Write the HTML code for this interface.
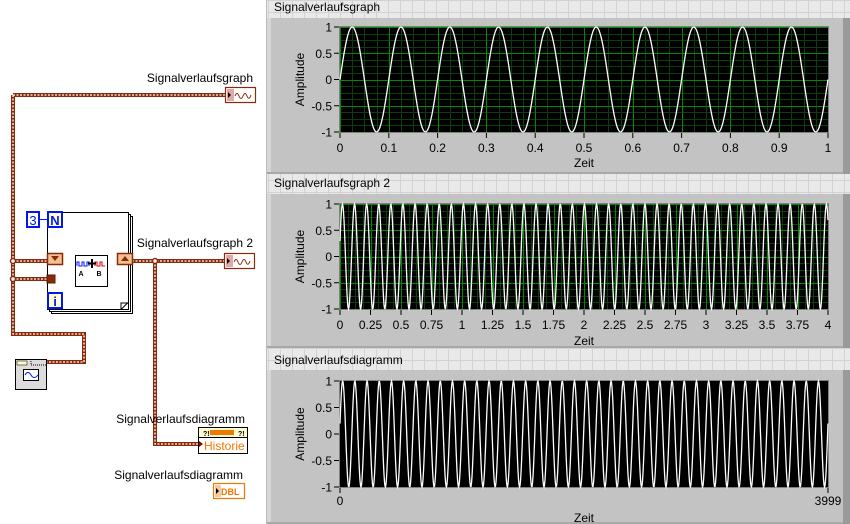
<!DOCTYPE html>
<html><head><meta charset="utf-8">
<style>
html,body{margin:0;padding:0;width:850px;height:524px;overflow:hidden;background:#fff;font-family:"Liberation Sans",sans-serif;}
svg text{font-family:"Liberation Sans",sans-serif;}
</style></head>
<body>
<svg id="s" width="850" height="524" xmlns="http://www.w3.org/2000/svg" style="position:absolute;left:0;top:0">
<defs>
<pattern id="bg" x="268" y="0" width="12" height="12" patternUnits="userSpaceOnUse">
<rect width="12" height="12" fill="#e9e9e9"/>
<path d="M0 0.5H12M0.5 0V12" stroke="#d2d2d2" stroke-width="1"/>
</pattern>
</defs>
<rect x="0" y="0" width="266" height="524" fill="#fff"/>
<rect x="266" y="0" width="584" height="524" fill="url(#bg)"/>
<line x1="266.5" y1="0" x2="266.5" y2="524" stroke="#bdbdbd"/>

<g fill="none" stroke-linejoin="miter">
<g stroke="#8a2a0a" stroke-width="4">
<path d="M13 95H226M13 95V334H84V362H47M13 261H48M13 279H48M55 279H70V266H76M62 258H76M107 258H117M132 261H226M155 261V444H200"/>
</g>
<g stroke="#fff" stroke-width="1.3" stroke-dasharray="2 1.5">
<path d="M13 95H226M13 95V334H84V362H47M13 261H48M13 279H48M55 279H70V266H76M62 258H76M107 258H117M132 261H226M155 261V444H200"/>
</g>
</g>
<circle cx="13" cy="261" r="2.5" fill="#fff" stroke="#8a2a0a" stroke-width="1.5"/>
<circle cx="13" cy="279" r="2.5" fill="#fff" stroke="#8a2a0a" stroke-width="1.5"/>
<circle cx="155" cy="261" r="2.5" fill="#fff" stroke="#8a2a0a" stroke-width="1.5"/>

<rect x="51.5" y="216.5" width="81" height="97" fill="#fff" stroke="#000"/>
<rect x="49.5" y="214.5" width="81" height="97" fill="#fff" stroke="#000"/>
<rect x="47.5" y="212.5" width="81" height="97" fill="#fff" stroke="#000"/>
<path d="M121 309.5L128 302.5M121 309V303H128" stroke="#000" fill="none"/>
<rect x="27" y="212" width="12" height="15" fill="#fff" stroke="#0018f0" stroke-width="2"/>
<text x="33" y="225" font-size="13" text-anchor="middle" fill="#0018f0">3</text>
<line x1="39" y1="219.5" x2="48" y2="219.5" stroke="#0018f0"/>
<rect x="48" y="212" width="14" height="15" fill="#fffbd0" stroke="#0018f0" stroke-width="2"/>
<text x="55" y="225" font-size="13" font-weight="bold" text-anchor="middle" fill="#0018f0">N</text>
<rect x="48" y="293" width="14" height="15" fill="#fffbd0" stroke="#0018f0" stroke-width="2"/>
<text x="55" y="306" font-size="13" font-weight="bold" text-anchor="middle" fill="#0018f0">i</text>
<rect x="47.5" y="253.5" width="15" height="11" fill="#f2c290" stroke="#8a2a0a" stroke-width="1.5"/>
<path d="M51 256H59L55 261Z" fill="#8a2a0a"/>
<rect x="117.5" y="253.5" width="15" height="11" fill="#f2c290" stroke="#8a2a0a" stroke-width="1.5"/>
<path d="M121 261H129L125 256Z" fill="#8a2a0a"/>
<rect x="47" y="275" width="8" height="8" fill="#8a2a0a" stroke="#5a1a00"/>
<rect x="75.5" y="255.5" width="32" height="31" fill="#fff" stroke="#000"/>
<path d="M77 266V262H79V266H82V262H84V266H87V262H89V266" stroke="#0018f0" fill="none"/>
<path d="M95 266V262H97V266H100V262H102V266H105" stroke="#e00000" fill="none"/>
<path d="M92 259V268M88 263.5H96" stroke="#000" stroke-width="2"/>
<text x="81" y="276" font-size="7" font-weight="bold" text-anchor="middle">A</text>
<text x="99" y="276" font-size="7" font-weight="bold" text-anchor="middle">B</text>

<text x="253" y="82" font-size="12" text-anchor="end">Signalverlaufsgraph</text>
<rect x="225.5" y="87.5" width="30" height="15" fill="#fff" stroke="#8a2a0a" stroke-width="1.2"/>
<rect x="227" y="89" width="7" height="12" fill="#e0a8a8"/>
<path d="M228 92L231 95L228 98Z" fill="#000"/>
<path d="M235 96Q237 91 239 96T243 96T247 96T251 95" stroke="#8a2a0a" fill="none"/>
<text x="253" y="247" font-size="12" text-anchor="end">Signalverlaufsgraph 2</text>
<rect x="224.5" y="253.5" width="30" height="15" fill="#fff" stroke="#8a2a0a" stroke-width="1.2"/>
<rect x="226" y="255" width="7" height="12" fill="#e0a8a8"/>
<path d="M227 258L230 261L227 264Z" fill="#000"/>
<path d="M234 262Q236 257 238 262T242 262T246 262T250 261" stroke="#8a2a0a" fill="none"/>

<rect x="15.5" y="359.5" width="31" height="30" fill="#dcdcdc" stroke="#000"/>
<rect x="17" y="361" width="10" height="4" fill="#fff8c0" stroke="#000" stroke-width="0.5"/>
<rect x="23.5" y="369.5" width="15" height="11" fill="#fff" stroke="#000"/>
<path d="M25 375Q28 370 31 375T38 375" stroke="#0018f0" fill="none"/>
<path d="M31 361V365H46" stroke="#000" stroke-dasharray="1 1" fill="none"/>

<text x="245" y="423" font-size="12" text-anchor="end">Signalverlaufsdiagramm</text>
<rect x="198.5" y="427.5" width="49" height="26" fill="#fff" stroke="#000"/>
<rect x="199" y="428" width="48" height="9" fill="#fffbd0"/>
<line x1="199" y1="437.5" x2="247" y2="437.5" stroke="#000"/>
<rect x="210" y="430" width="24" height="5" fill="#f07800"/>
<text x="203" y="436" font-size="7" font-weight="bold">?!</text>
<text x="238" y="436" font-size="7" font-weight="bold">?!</text>
<path d="M199 441L203 444L199 447Z" fill="#800"/>
<text x="204" y="450" font-size="12" fill="#f07800">Historie</text>
<text x="243" y="479" font-size="12" text-anchor="end">Signalverlaufsdiagramm</text>
<rect x="213.5" y="483.5" width="31" height="15" fill="#fff" stroke="#f07800" stroke-width="1.2"/>
<rect x="215" y="485" width="6" height="12" fill="#f8c8a0"/>
<path d="M216 488L219 491L216 494Z" fill="#000"/>
<text x="221" y="495" font-size="9" font-weight="bold" fill="#f07800">DBL</text>

<g id="fp"></g>
</svg>
<script>
var fp=document.getElementById('fp');var h='';
function frame(ly,fy,fh,title){
 h+='<text x="274" y="'+(ly+11)+'" font-size="12">'+title+'</text>';
 h+='<rect x="267" y="'+fy+'" width="576" height="'+fh+'" fill="#c3c3c3"/>';
 h+='<rect x="267" y="'+fy+'" width="4" height="'+fh+'" fill="#d6d6d6"/>';
 h+='<rect x="843" y="'+fy+'" width="7" height="'+fh+'" fill="#9a9a9a"/>';
 h+='<rect x="267" y="'+(fy+fh-2)+'" width="576" height="2" fill="#a8a8a8"/>';
}
var X0=340,X1=828;
function plot(y0,y1,grid,nx,xt,fn,ylZeit,xlabY){
 var H=y1-y0;
 h+='<rect x="'+X0+'" y="'+y0+'" width="'+(X1-X0)+'" height="'+H+'" fill="#000"/>';
 if(grid){
  for(var i=0;i<=nx;i++){var x=Math.round(X0+(X1-X0)*i/nx)+0.5;h+='<line x1="'+x+'" y1="'+y0+'" x2="'+x+'" y2="'+y1+'" stroke="#0d3d0d" stroke-width="1"/>';}
  for(var j=0;j<=16;j++){var y=Math.round(y0+H*j/16)+0.5;h+='<line x1="'+X0+'" y1="'+y+'" x2="'+X1+'" y2="'+y+'" stroke="#0d3d0d" stroke-width="1"/>';}
  for(var i=0;i<xt.length;i++){var x=Math.round(X0+(X1-X0)*i/(xt.length-1))+0.5;h+='<line x1="'+x+'" y1="'+y0+'" x2="'+x+'" y2="'+y1+'" stroke="#008a00" stroke-width="1"/>';}
  for(var j=0;j<=4;j++){var y=Math.round(y0+H*j/4)+0.5;h+='<line x1="'+X0+'" y1="'+y+'" x2="'+X1+'" y2="'+y+'" stroke="#008a00" stroke-width="1"/>';}
 }
 h+='<rect x="'+(X0-0.5)+'" y="'+(y0-0.5)+'" width="'+(X1-X0+1)+'" height="'+(H+1)+'" fill="none" stroke="#808080"/>';
 var p='';
 for(var x=X0;x<=X1;x+=0.5){var v=fn(x-X0);p+=(p?'L':'M')+x.toFixed(1)+' '+(y0+H/2-v*H/2).toFixed(1);}
 h+='<path d="'+p+'" stroke="#fff" stroke-width="1.3" fill="none"/>';
 var yl=['1','0.5','0','-0.5','-1'];
 for(var j=0;j<5;j++){var y=y0+H*j/4;h+='<line x1="334" y1="'+y+'" x2="339" y2="'+y+'" stroke="#000"/><text x="332" y="'+(y+4.5)+'" font-size="12" text-anchor="end">'+yl[j]+'</text>';}
 h+='<text transform="translate(304,'+(y0+H/2)+') rotate(-90)" font-size="12" text-anchor="middle">Amplitude</text>';
 for(var i=0;i<xt.length;i++){var x=X0+(X1-X0)*i/(xt.length-1);
   h+='<line x1="'+x+'" y1="'+(y1+1)+'" x2="'+x+'" y2="'+(y1+6)+'" stroke="#000"/><text x="'+x+'" y="'+xlabY+'" font-size="12" text-anchor="middle">'+xt[i]+'</text>';}
 h+='<text x="584" y="'+ylZeit+'" font-size="12" text-anchor="middle">Zeit</text>';
}
frame(0,18,156,'Signalverlaufsgraph');
plot(27,132,true,40,['0','0.1','0.2','0.3','0.4','0.5','0.6','0.7','0.8','0.9','1'],function(d){return Math.sin(2*Math.PI*d/48.8);},167,152);
frame(176,194,154,'Signalverlaufsgraph 2');
plot(204,309,true,64,['0','0.25','0.5','0.75','1','1.25','1.5','1.75','2','2.25','2.5','2.75','3','3.25','3.5','3.75','4'],function(d){return Math.sin(2*Math.PI*d/12.1+0.3);},345,329);
frame(353,370,154,'Signalverlaufsdiagramm');
plot(381,487,false,0,['0','3999'],function(d){return Math.sin(2*Math.PI*d/12.2+0.2);},522,505);
fp.innerHTML=h;
</script>
</body></html>
